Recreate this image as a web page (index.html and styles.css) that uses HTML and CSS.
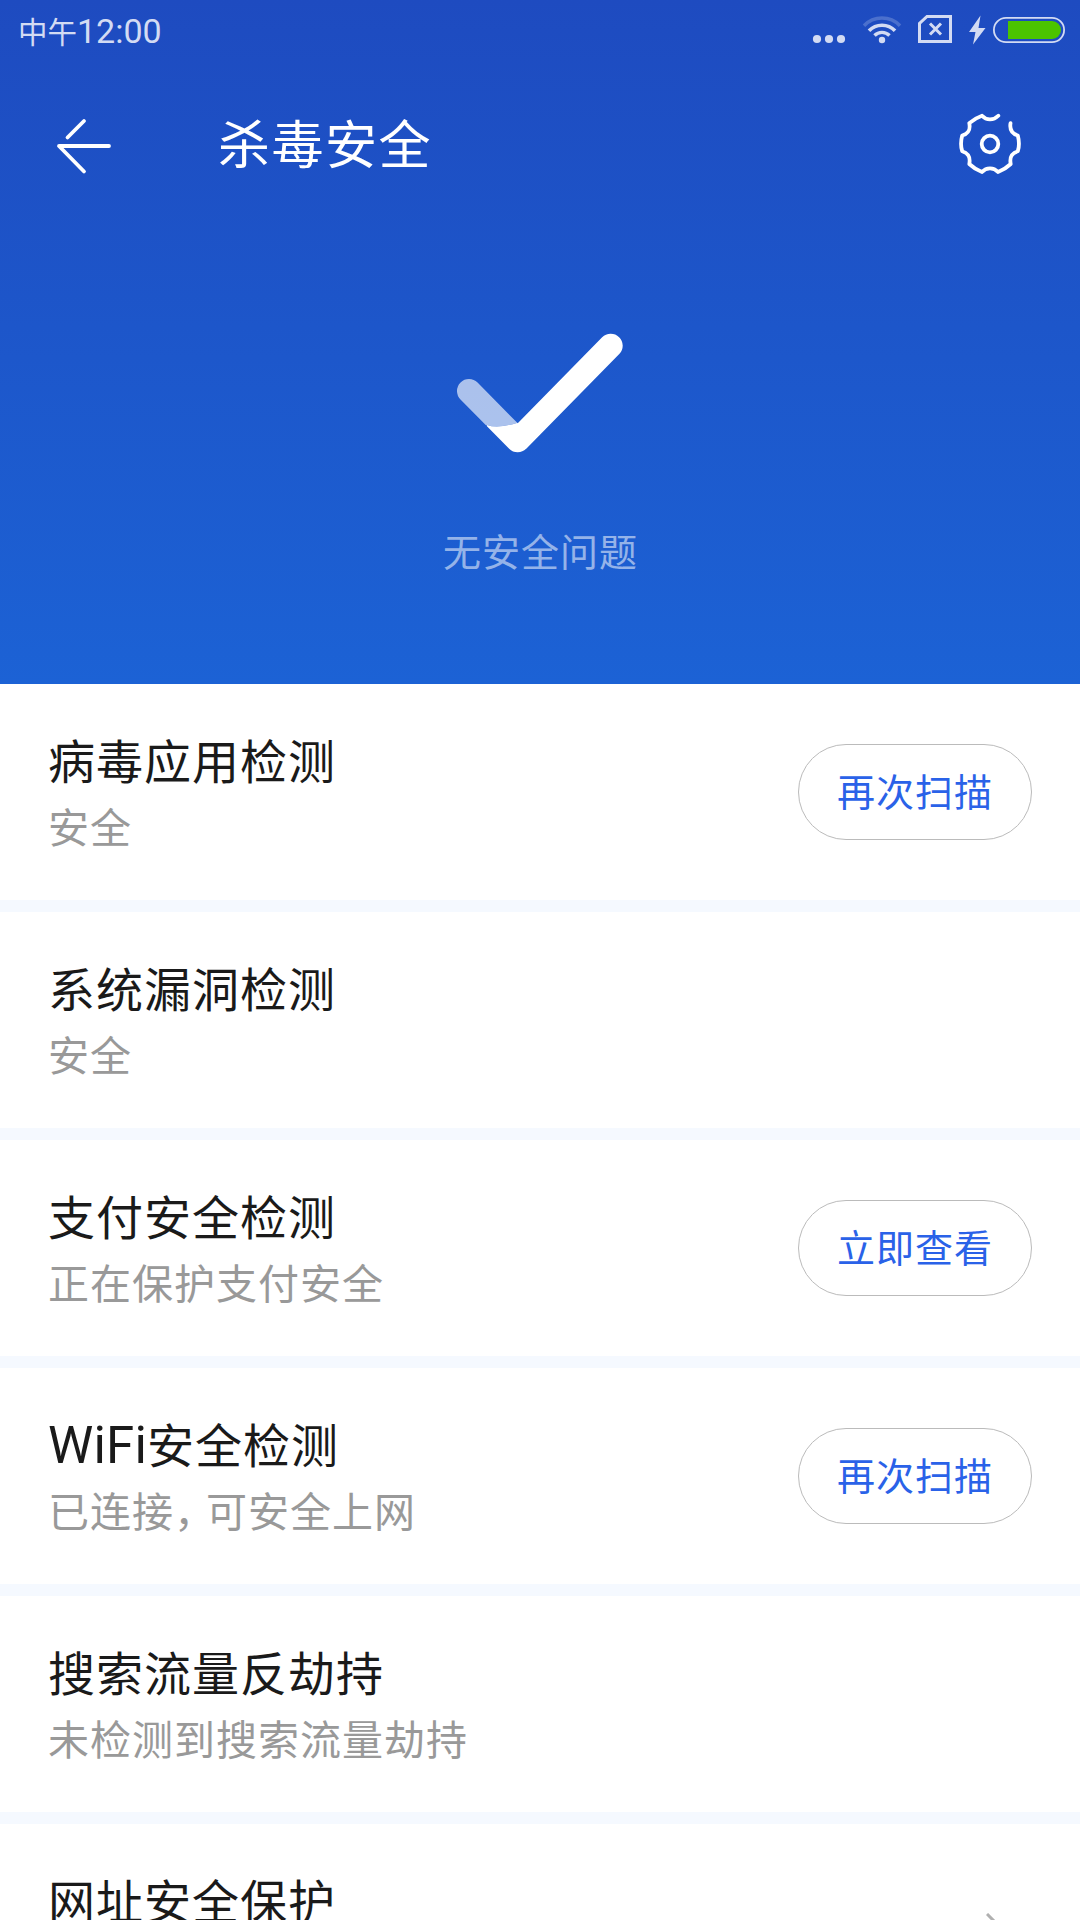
FILE: index.html
```html
<!DOCTYPE html>
<html lang="zh-CN">
<head>
<meta charset="utf-8">
<title>杀毒安全</title>
<link rel="stylesheet" href="styles.css">
</head>
<body>
<header class="hero">
  <div class="status">
    <div class="time">中午<span class="digits">12:00</span></div>
    <svg class="status-icons" width="290" height="60" viewBox="0 0 290 60">
      <g fill="#d3dbf3">
        <circle cx="27" cy="39" r="4.1"/><circle cx="39" cy="39" r="4.1"/><circle cx="51" cy="39" r="4.1"/>
        <circle cx="92" cy="40" r="3.2"/>
        <path d="M190.500 15.500 179 32h6.500l-2.500 12.500L195.500 28h-7z"/>
      </g>
      <g fill="none" stroke="#d3dbf3">
        <path d="M84.500 35.500a10.500 10.500 0 0 1 15 0" stroke-width="3.400"/>
        <path d="M79 30.800a18 18 0 0 1 26 0" stroke-width="3.600"/>
        <path d="M74 25.700a25 25 0 0 1 36 0" stroke-width="3.600" opacity=".25"/>
        <path d="M137 16.500h23.500v25h-31V23.500z" stroke-width="3"/>
        <path d="M150 23.500l11 11M161 23.500l-11 11" transform="translate(-10)" stroke-width="3"/>
        <rect x="203.900" y="17.900" width="70.200" height="24.200" rx="12.100" stroke-width="1.800"/>
      </g>
      <path d="M218 21h44a9 9 0 0 1 0 18h-44z" fill="#4bc400"/>
    </svg>
  </div>
  <div class="bar">
    <svg class="back" width="60" height="60" viewBox="0 0 60 60" fill="none" stroke="#fff" stroke-width="3.800" stroke-linecap="round" stroke-linejoin="round">
      <path d="M54 31H4L29 56.500M12.500 22.500 29 6"/>
    </svg>
    <h1 class="title">杀毒安全</h1>
    <svg class="gear" width="64" height="64" viewBox="0 0 64 64" fill="none" stroke="#fff" stroke-width="3.800" stroke-linecap="round" stroke-linejoin="round">
      <path d="M40.300 3.700Q36.800 7.300 32 7.300T24 3.700Q16.800 6.200 11.300 11.200C12.600 18 10.500 21.600 4.200 23.500Q1.900 32 4.200 39.200C10.500 41.200 12.600 45 11.300 52Q17 57.400 24 60Q27.200 56.400 32 56.400T40 60Q47 57.400 52.700 52C51.400 45 53.500 41.200 59.800 39.200Q62.100 32 59.800 23.500C54 21.600 51.400 18 52.500 11.200"/>
      <circle cx="32" cy="32" r="8.300"/>
    </svg>
  </div>
  <div class="result">
    <svg width="168" height="124" viewBox="0 0 168 124">
      <defs>
        <clipPath id="short-arm"><path d="M0 0H61.700V92.700Q42 99 31 95L0 112z"/></clipPath>
        <clipPath id="long-arm"><path d="M168 0H61.700V92.700Q42 99 31 95L20 124H168z"/></clipPath>
      </defs>
      <g fill="none" stroke="#fff" stroke-width="24" stroke-linecap="round" stroke-linejoin="round">
        <path d="M13 61 61.700 110.300 154.700 15.700" opacity=".63" clip-path="url(#short-arm)"/>
        <path d="M13 61 61.700 110.300 154.700 15.700" clip-path="url(#long-arm)"/>
      </g>
    </svg>
    <p class="message">无安全问题</p>
  </div>
</header>
<main class="list">
  <section class="row">
    <div class="text"><h2>病毒应用检测</h2><p>安全</p></div>
    <button class="action">再次扫描</button>
  </section>
  <section class="row">
    <div class="text"><h2>系统漏洞检测</h2><p>安全</p></div>
  </section>
  <section class="row">
    <div class="text"><h2>支付安全检测</h2><p>正在保护支付安全</p></div>
    <button class="action">立即查看</button>
  </section>
  <section class="row">
    <div class="text"><h2><span class="latin">WiFi</span>安全检测</h2><p>已连接<span class="comma">，</span>可安全上网</p></div>
    <button class="action">再次扫描</button>
  </section>
  <section class="row">
    <div class="text"><h2>搜索流量反劫持</h2><p>未检测到搜索流量劫持</p></div>
  </section>
  <section class="row row-last">
    <div class="text"><h2>网址安全保护</h2></div>
    <svg class="chevron" width="20" height="7" viewBox="0 0 20 7" fill="none" stroke="#b0b0b0" stroke-width="3"><path d="M1 1 17 17 1 33"/></svg>
  </section>
</main>
</body>
</html>
```

FILE: styles.css
```css
* { box-sizing: border-box; }
body {
  margin: 0;
  height: 1920px;
  overflow: hidden;
  background: #fff;
  font-family: "Noto Sans CJK SC", sans-serif;
}
h1, h2, p { margin: 0; font-weight: 400; white-space: nowrap; }
svg { display: block; flex: none; }

.hero {
  height: 684px;
  background: linear-gradient(#1e4bc0, #1c62d5);
  color: #fff;
}
.status {
  display: flex;
  justify-content: space-between;
  height: 60px;
  padding-left: 18px;
}
.time {
  display: flex;
  font-size: 29.500px;
  line-height: 60px;
  color: #d3dbf3;
}
.digits { font-family: Roboto, sans-serif; font-size: 34px; line-height: 62px; }
.bar {
  display: flex;
  align-items: center;
  height: 170px;
  padding: 0 58px 0 55px;
}
.title {
  flex: 1;
  margin-left: 103px;
  padding-bottom: 7px;
  font-size: 52px;
  letter-spacing: 1.5px;
  line-height: 80px;
}
.gear { margin-bottom: 2px; }
.result {
  display: flex;
  flex-direction: column;
  align-items: center;
  padding-top: 100px;
}
.message {
  margin: 66px 0 0 1px;
  font-size: 38px;
  line-height: 60px;
  letter-spacing: 1px;
  color: rgba(255, 255, 255, .55);
}

.row {
  display: flex;
  justify-content: space-between;
  height: 228px;
  padding: 43px 48px 0;
  border-bottom: 12px solid #f5f9ff;
}
.row-last { height: 96px; border-bottom: 0; overflow: hidden; }
.text h2 {
  height: 64px;
  font-size: 47px;
  letter-spacing: 1px;
  line-height: 64px;
  color: #1a1a1a;
}
.text p {
  font-size: 41px;
  letter-spacing: 1px;
  line-height: 68px;
  color: #999;
}
.latin {
  font-family: Roboto, sans-serif;
  font-size: 51px;
  line-height: 1;
  letter-spacing: .2px;
}
.comma { letter-spacing: -9px; }
.action {
  width: 234px;
  height: 96px;
  margin-top: 17px;
  padding: 0 0 5px;
  border: 1px solid #bbb;
  border-radius: 48px;
  background: #fff;
  font: 400 38px "Noto Sans CJK SC", sans-serif;
  letter-spacing: 1px;
  color: #2a62e8;
}
.chevron { margin: 46px 26px 0 0; }
```
